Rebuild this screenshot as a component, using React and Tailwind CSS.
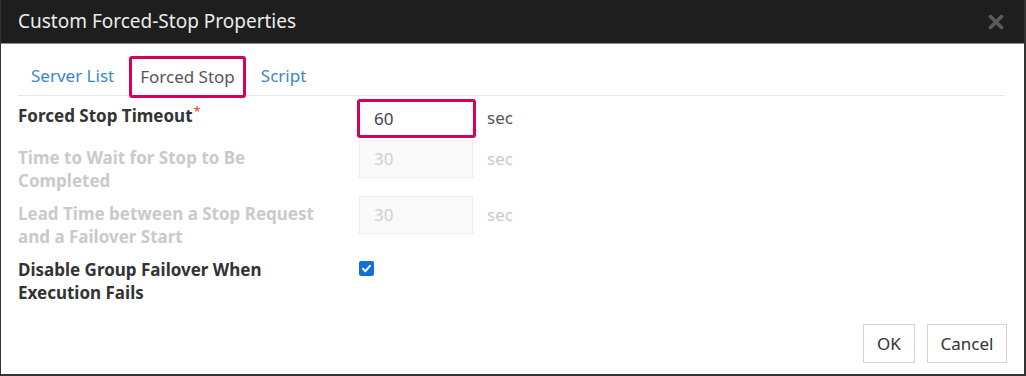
import React from 'react'

const font = { fontFamily: '"Noto Sans", "Open Sans", sans-serif' }

function CloseIcon() {
    return (
        <svg width="16" height="16" viewBox="0 0 16 16" className="block">
            <path d="M2.5 2.5 L13.5 13.5 M13.5 2.5 L2.5 13.5" stroke="#5a5a5a" strokeWidth="3.6" strokeLinecap="round" />
        </svg>
    )
}

function Field({ value, highlight }) {
    if (highlight) {
        return (
            <div className="w-[119px] h-[39px] border-[3px] border-[#d6005f] rounded-[3px] bg-white flex items-center pl-[14px] text-[17px] text-[#444] shrink-0">
                {value}
            </div>
        )
    }
    return (
        <div className="ml-[2px] w-[114px] h-[38px] border border-[#ececec] bg-[#fafafa] flex items-center pl-[14px] text-[17px] text-[#d0d0d0] shrink-0">
            {value}
        </div>
    )
}

export default class App extends React.Component {

    render() {
        return (
            <div style={font} className="w-[1026px] h-[376px] bg-white border-l border-r-2 border-b-2 border-[#333] flex flex-col overflow-hidden">
                <div className="h-[44px] bg-[#1e1e1e] border-b border-[#8a8a8a] flex items-center justify-between pl-[17px] pr-[20px] shrink-0">
                    <span className="text-[19px] text-[#ececec]">Custom Forced-Stop Properties</span>
                    <CloseIcon />
                </div>
                <div className="flex-1 flex flex-col pl-[17px] pr-[19px]">
                    <div className="mt-[12px] h-[40px] border-b border-[#e6e6e6] flex items-start text-[17px]">
                        <div className="h-[40px] px-[13px] flex items-center text-[#3b87c8]">Server List</div>
                        <div className="ml-[2px] h-[42px] px-[8px] border-[3px] border-[#d6005f] rounded-[3px] flex items-center text-[#555] bg-white">Forced Stop</div>
                        <div className="h-[40px] px-[15px] flex items-center text-[#3b87c8]">Script</div>
                    </div>

                    <div className="mt-[3px] h-[41px] flex items-start">
                        <div className="w-[339px] mt-[5px] text-[17px] leading-[23px] font-bold text-[#333]">
                            Forced Stop Timeout<sup className="text-[#e0452b] font-normal text-[13px] ml-[1px]">*</sup>
                        </div>
                        <Field value="60" highlight />
                        <span className="ml-[11px] mt-[6px] text-[17px] text-[#555]">sec</span>
                    </div>

                    <div className="h-[56px] flex items-start">
                        <div className="w-[339px] mt-[6px] text-[17px] leading-[23px] font-bold text-[#cacaca]">
                            Time to Wait for Stop to Be<br />Completed
                        </div>
                        <Field value="30" />
                        <span className="ml-[14px] mt-[6px] text-[17px] text-[#cacaca]">sec</span>
                    </div>

                    <div className="h-[56px] flex items-start">
                        <div className="w-[339px] mt-[6px] text-[17px] leading-[23px] font-bold text-[#cacaca]">
                            Lead Time between a Stop Request<br />and a Failover Start
                        </div>
                        <Field value="30" />
                        <span className="ml-[14px] mt-[6px] text-[17px] text-[#cacaca]">sec</span>
                    </div>

                    <div className="flex items-start">
                        <div className="w-[339px] mt-[6px] text-[17px] leading-[23px] font-bold text-[#333]">
                            Disable Group Failover When<br />Execution Fails
                        </div>
                        <div className="ml-[2px] mt-[9px] w-[15px] h-[15px] rounded-[2px] bg-[#1170dd] flex items-center justify-center">
                            <svg width="11" height="11" viewBox="0 0 11 11">
                                <path d="M2 5.8 L4.4 8.2 L9 2.8" stroke="white" strokeWidth="2" fill="none" strokeLinecap="round" strokeLinejoin="round" />
                            </svg>
                        </div>
                    </div>

                    <div className="mt-auto mb-[11px] -mr-[2px] flex justify-end gap-[12px] text-[17px] text-[#333]">
                        <button className="w-[52px] h-[39px] border border-[#d4d4d4] bg-white">OK</button>
                        <button className="w-[80px] h-[39px] border border-[#d4d4d4] bg-white">Cancel</button>
                    </div>
                </div>
            </div>
        )
    }
}
